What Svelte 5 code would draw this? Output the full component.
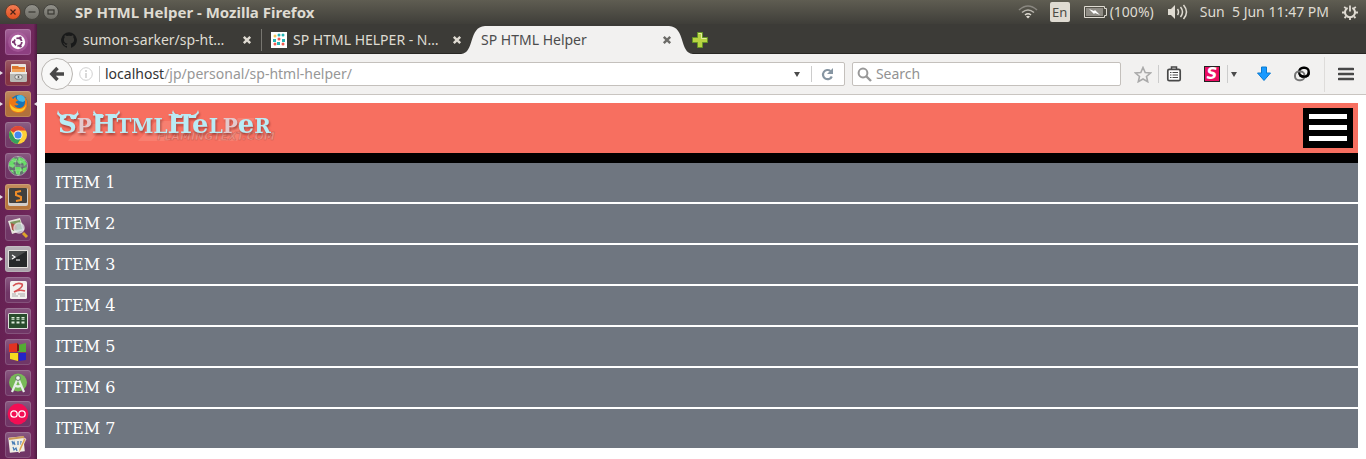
<script>
  const items = [1, 2, 3, 4, 5, 6, 7];
  const apps = [
    { id: 'ubuntu', name: 'Dash', tile: '#8d3f80' },
    { id: 'files', name: 'Files', tile: '#853543', running: true },
    { id: 'firefox', name: 'Firefox', tile: '#b1713c', running: true, focused: true },
    { id: 'chrome', name: 'Chrome', tile: '#733c69' },
    { id: 'globe', name: 'Network', tile: '#703666' },
    { id: 'sublime', name: 'Sublime Text', tile: '#b6763c', running: true },
    { id: 'viewer', name: 'Image Viewer', tile: '#703666' },
    { id: 'terminal', name: 'Terminal', tile: '#aaa3aa', running: true },
    { id: 'reader', name: 'Document Viewer', tile: '#703666' },
    { id: 'monitor', name: 'System Monitor', tile: '#703666' },
    { id: 'blocks', name: 'Workspaces', tile: '#703666' },
    { id: 'studio', name: 'Android Studio', tile: '#703666' },
    { id: 'oo', name: 'Recorder', tile: '#703666' },
    { id: 'notes', name: 'Notes', tile: '#703666' }
  ];
</script>

{#snippet closeIcon()}
  <svg width="10" height="10" viewBox="0 0 10 10" aria-hidden="true"><path d="M1.8 1.8 8.2 8.2M8.2 1.8 1.8 8.2" stroke="currentColor" stroke-width="2.4" /></svg>
{/snippet}

{#snippet appIcon(id)}
  <svg width="26" height="26" viewBox="0 0 26 26" aria-hidden="true">
    {#if id === 'ubuntu'}
      <circle cx="13" cy="13" r="10" fill="#b568a8" opacity=".5" />
      <circle cx="13" cy="13" r="7.2" fill="#fff" />
      <circle cx="13" cy="13" r="3.8" fill="none" stroke="#7c3771" stroke-width="1.8" stroke-dasharray="6.4 1.5" />
      <g fill="#7c3771"><circle cx="8.2" cy="13" r="1.3" /><circle cx="15.4" cy="8.8" r="1.3" /><circle cx="15.4" cy="17.2" r="1.3" /></g>
    {:else if id === 'files'}
      <rect x="6" y="4" width="15" height="10" rx="1" fill="#e9e5dd" />
      <path d="M7 6h6l1 1h6v6H7z" fill="#dc762c" /><path d="M7 9h13v5H7z" fill="#f2a35a" />
      <rect x="5" y="12" width="17" height="10" rx="1.5" fill="#b8b8b4" /><rect x="5" y="12" width="17" height="2" fill="#e8e8e4" />
      <rect x="10" y="15" width="7" height="4" rx="1.5" fill="#e9e9e7" stroke="#666" stroke-width=".8" /><circle cx="13.5" cy="17" r="1" fill="#555" />
    {:else if id === 'firefox'}
      <circle cx="14" cy="12.5" r="8.8" fill="#1674b8" /><path d="M12 5q6-3 9 4l-3 2-4-1-2-2z" fill="#49b9e3" />
      <path d="M5 5q0 3-1 7c0 6 4 10 9.500 10 6 0 9-5 9-9 0-4-2-6-3-7 2 7-1 11-5 11-3 0-5-2-5-3 2 1 4 0 4-1-2-1-3-1-3-2l3-2c-2 0-3-1-3-3-2 1-2 2-2 2C6 7 5 5 5 5z" fill="#ed7715" />
      <path d="M5 13c0 6 4 8 9 8 4 0 7-3 7-8-1 4-4 5-7 5-5 0-7-3-9-5z" fill="#fbc629" />
    {:else if id === 'chrome'}
      <circle cx="13" cy="13" r="9" fill="#ffcf37" /><path d="M13 13 5.200 8.500A9 9 0 0 1 20.800 8.500H13z" fill="#de4637" />
      <path d="M5.200 8.500A9 9 0 0 0 12.500 22l4-6.500L13 13 9 15z" fill="#37a15d" />
      <circle cx="13" cy="13" r="4.500" fill="#f3f3f3" /><circle cx="13" cy="13" r="3.500" fill="#4389ef" />
    {:else if id === 'globe'}
      <circle cx="13" cy="13" r="9.600" fill="#62736e" stroke="#a392a6" />
      <path d="M4 10l4-5 4 1-1 3-3 1 2 2-2 3-4-2zM14 4l5 2 3 5-3 2-1-3-4 1-2-3zM10 14l5 0 3 3-3 2v3l-4-1zM18 15l4-1-1 4-3 2zM5 17l3 0 1 4z" fill="#69dc69" />
      <path d="M4 13h18M6 7q7 4 14 0M6 19q7-4 14 0M13 3q-6 10 0 20M13 3q6 10 0 20" fill="none" stroke="#c7d6c5" stroke-width=".6" opacity=".6" />
    {:else if id === 'sublime'}
      <rect x="3" y="4" width="20" height="18" rx="2" fill="#d2ceca" /><rect x="4" y="4" width="18" height="15" rx="1" fill="#41403e" />
      <path d="M16 7l-5 1v3l5 2v3l-5 1" fill="none" stroke="#f08d27" stroke-width="2" />
    {:else if id === 'viewer'}
      <path d="M3 6l12-3 4 12-12 4z" fill="#e8e5dd" /><path d="M5 7l10-2 2 9-9 2z" fill="#7f9a62" /><path d="M6 8l5 2 1 4-5 1z" fill="#b14d44" />
      <circle cx="14" cy="13" r="5" fill="#cddae0" opacity=".75" stroke="#eee" stroke-width="1.500" /><path d="m18 18 4 4" stroke="#dda52a" stroke-width="3" />
    {:else if id === 'terminal'}
      <rect x="3" y="4" width="20" height="18" rx="1" fill="#e4e3df" /><rect x="4" y="5" width="18" height="16" fill="#26292a" />
      <path d="M4 5h18L7 14H4z" fill="#4b4e4e" /><path d="m7 9 3 2-3 2M11 14h4" fill="none" stroke="#fff" stroke-width="1.200" />
    {:else if id === 'reader'}
      <rect x="5" y="4" width="17" height="18" rx="1.500" fill="#f4f1ef" />
      <path d="M8 9q4-4 9-2 2 3-8 8 5-3 11-1" fill="none" stroke="#d65252" stroke-width="1.600" /><path d="M7 17h4m2 0h7M7 19h6m2 0h5" stroke="#aaa" />
    {:else if id === 'monitor'}
      <rect x="3" y="5" width="20" height="16" rx="1.500" fill="#e0e0dc" /><rect x="4" y="6" width="18" height="14" fill="#294c2d" />
      <path d="M8 9v7m5-7v7m5-7v7" stroke="#dbead9" stroke-width="3" stroke-dasharray="1.500 .7" /><path d="M5 12.500h16" stroke="#294c2d" />
    {:else if id === 'blocks'}
      <path d="M4 5l8-1v9H4z" fill="#e33222" /><path d="M13 6l8-2v9h-8z" fill="#54ab33" /><path d="M5 14h8v8l-8-2z" fill="#f5dc1e" /><path d="M14 14h7v7l-7 1z" fill="#2524c7" /><path d="M12 4l2 2v6h-2z" fill="#731b14" />
    {:else if id === 'studio'}
      <circle cx="13" cy="12.500" r="9" fill="#78b957" /><path d="m13 8-6 14m6-14 6 14M9 15q4 3 8 0" fill="none" stroke="#e7eee8" stroke-width="2.200" /><circle cx="13" cy="8" r="2.400" fill="#eef3ee" stroke="#637568" />
    {:else if id === 'oo'}
      <circle cx="13" cy="13" r="10.400" fill="#f20e54" /><g fill="none" stroke="#fff" stroke-width="1.300"><circle cx="9" cy="13" r="3.200" /><circle cx="17" cy="13" r="3.200" /></g>
    {:else}
      <rect x="4" y="5" width="15" height="15" fill="#f0eee5" transform="rotate(-6 12 12)" /><path d="M4 7l15-2" stroke="#cc9b57" stroke-width="2" />
      <path d="m7 9 1 3 1-2 1 3m3-4v4m3-4v4M8 15l1 3 2-2 1 3" fill="none" stroke="#4179b4" stroke-width="1.200" /><path d="m21 7-5 11-2 3 0-4 5-11z" fill="#dba54f" stroke="#fff" stroke-width=".6" />
    {/if}
  </svg>
{/snippet}

<div class="desktop">
  <header class="titlebar">
    <div class="window-buttons">
      <button class="win close" aria-label="Close window"><svg viewBox="0 0 16 16"><path d="m5.500 5.500 5 5m0-5-5 5" stroke="#4b2217" stroke-width="1.200" /></svg></button>
      <button class="win" aria-label="Minimize"><svg viewBox="0 0 16 16"><path d="M4.500 8h7" stroke="#393833" stroke-width="1.200" /></svg></button>
      <button class="win" aria-label="Maximize"><svg viewBox="0 0 16 16"><rect x="5" y="6" width="6" height="4" fill="none" stroke="#393833" stroke-width="1.200" /></svg></button>
    </div>
    <strong class="window-title">SP HTML Helper - Mozilla Firefox</strong>
    <div class="indicators">
      <svg class="wifi" width="20" height="16" viewBox="0 0 20 16"><g fill="none" stroke-width="1.600"><path d="M1 6q9-8 18 0" stroke="#8a8881" /><path d="M4 8.500q6-5 12 0" stroke="#bab7af" /><path d="M7 11q3-2.500 6 0" stroke="#dfdbd2" /></g><path d="m8 12.500 2 2 2-2q-2-1.500-4 0z" fill="#dfdbd2" /></svg>
      <span class="lang">En</span>
      <span class="battery">
        <svg width="25" height="14" viewBox="0 0 25 14"><path d="M1.500 1.500h20v2h2v7h-2v2h-20z" fill="none" stroke="#dfdbd2" /><path d="M3 3h17v8H3z" fill="#8e8b84" /><path d="m6 4 5 2 1-1 5 5-5-2-1 1z" fill="#fff" /></svg>
        (100%)
      </span>
      <svg class="sound" width="20" height="18" viewBox="0 0 20 18"><path d="M0 6h3l4-4v14l-4-4H0z" fill="#dfdbd2" /><path d="M9.500 6q2 3 0 6M12.500 4q4 5 0 10M15.500 2q6 7 0 14" fill="none" stroke="#dfdbd2" stroke-width="1.500" /></svg>
      <time>Sun&nbsp; 5 Jun 11:47 PM</time>
      <svg width="16" height="16" viewBox="0 0 16 16"><path d="M5.600 3.800a5 5 0 1 0 4.800 0" fill="none" stroke="#dfdbd2" stroke-width="2" /><path d="M8 1.500v6M2.200 2.800 4 4.400m9.800-1.600L12 4.400M0 8.500h3m10 0h3M2.500 14 4 12.500m9.500 1.500L12 12.500M8 13v3" stroke="#dfdbd2" stroke-width="1.800" /></svg>
    </div>
  </header>

  <div class="workspace">
    <nav class="launcher" aria-label="Applications">
      {#each apps as app}
        <button class="app" class:running={app.running} class:focused={app.focused} aria-label={app.name} style:background-color={app.tile}>{@render appIcon(app.id)}</button>
      {/each}
    </nav>

    <div class="browser">
      <div class="tabs">
        <div class="tab first">
          <svg width="16" height="16" viewBox="0 0 16 16"><path d="M8 .3a7.900 7.900 0 0 0-2.500 15.400c.4.100.5-.2.500-.4v-1.500c-2.200.5-2.700-1-2.700-1-.4-.9-.9-1.200-.9-1.200-.7-.5.1-.5.1-.5.8.1 1.200.8 1.200.8.700 1.300 1.900.9 2.300.7.100-.5.300-.9.500-1.100-1.800-.2-3.600-.9-3.600-4 0-.9.300-1.600.8-2.100-.1-.2-.4-1 .1-2.100 0 0 .7-.2 2.200.8a7.600 7.600 0 0 1 4 0c1.500-1 2.200-.8 2.200-.8.400 1.100.2 1.900.1 2.100.5.600.8 1.300.8 2.100 0 3.100-1.900 3.800-3.700 4 .3.300.6.800.6 1.500v2.300c0 .2.100.5.500.4A7.900 7.900 0 0 0 8 .3z" fill="#191a1a" /></svg>
          <span class="tab-text">sumon-sarker/sp-ht…</span>
          <button aria-label="Close tab">{@render closeIcon()}</button>
        </div>
        <div class="tab">
          <svg width="16" height="16" viewBox="0 0 16 16"><path fill="#fff" d="M0 0h16v16H0z" /><g fill="#27b5b5"><circle cx="8" cy="3" r="1.500" /><circle cx="12" cy="3" r="1.500" /><path d="M2 7h3v3H2zM6 10h3v3H6zM11 7h3v3h-3z" /></g><g fill="#ef5b50"><circle cx="8" cy="7" r="1.500" /><circle cx="4" cy="12" r="1.500" /><circle cx="12" cy="12" r="1.500" /></g><circle cx="4" cy="4" r="1.500" fill="#f4c95b" /></svg>
          <span class="tab-text">SP HTML HELPER - N…</span>
          <button aria-label="Close tab">{@render closeIcon()}</button>
        </div>
        <div class="tab active">
          <svg class="curve" viewBox="0 0 232 28" preserveAspectRatio="none" aria-hidden="true"><path d="M0 28C14 27 7 1 24 0H208C225 1 218 27 232 28z" fill="#f2f1f0" /></svg>
          <span class="tab-text">SP HTML Helper</span>
          <button aria-label="Close tab">{@render closeIcon()}</button>
        </div>
        <button class="new-tab" aria-label="New tab"><svg width="16" height="16" viewBox="0 0 16 16"><path d="M5.500.5h5v5h5v5h-5v5h-5v-5h-5v-5h5z" fill="#b8d342" stroke="#659526" /><path d="M6.500 1.500h3v5h5" fill="none" stroke="#e3ee9c" /></svg></button>
      </div>

      <div class="toolbar">
        <button class="back" aria-label="Back"><svg width="16" height="16" viewBox="0 0 16 16"><path d="M8.500 2 2.800 8l5.700 6M3 8h12" fill="none" stroke="#484848" stroke-width="3.400" /></svg></button>
        <div class="address">
          <svg width="14" height="14" viewBox="0 0 14 14"><circle cx="7" cy="7" r="6.300" fill="none" stroke="#d0d0d0" /><path d="M7 3v2m0 1v5" stroke="#d0d0d0" stroke-width="1.600" /></svg>
          <i class="divider"></i>
          <span class="url"><b>localhost</b>/jp/personal/sp-html-helper/</span>
          <button class="drop" aria-label="Show history"><svg width="6" height="5" viewBox="0 0 6 5"><path d="M0 0h6L3 5z" fill="#4b4b4b" /></svg></button>
          <button class="reload" aria-label="Reload"><svg width="13" height="13" viewBox="0 0 13 13"><path d="M9.500 3A4.600 4.600 0 1 0 10.800 8.500" fill="none" stroke="#8695a2" stroke-width="2.200" /><path d="M12 0v6H6z" fill="#8695a2" /></svg></button>
        </div>
        <label class="search">
          <svg width="15" height="15" viewBox="0 0 15 15"><circle cx="6" cy="6" r="4.400" fill="none" stroke="#989898" stroke-width="2" /><path d="m9 9 5 5" stroke="#989898" stroke-width="2.400" /></svg>
          <input type="text" placeholder="Search" aria-label="Search" />
        </label>
        <div class="tools">
          <button class="star" aria-label="Bookmark"><svg width="18" height="17" viewBox="0 0 18 17"><path d="m9 1.500 2.200 5 5.300.5-4 3.500 1.200 5.200L9 13l-4.700 2.700 1.200-5.200-4-3.500 5.300-.5z" fill="none" stroke="#aaa" stroke-width="1.600" /></svg></button>
          <button class="list" aria-label="Show bookmarks"><svg width="16" height="16" viewBox="0 0 16 16"><path d="M5.500 3V1h5v2" fill="none" stroke="#484848" stroke-width="1.500" /><rect x="1.800" y="3.300" width="12.400" height="11.400" rx="1.500" fill="#fff" stroke="#484848" stroke-width="1.700" /><path d="M4 6.500h1.500m1 0H12M4 9h1.500m1 0H12M4 11.500h1.500m1 0H12" stroke="#484848" stroke-width="1.200" /></svg></button>
          <button class="ext" aria-label="S extension"><span class="letter">S</span></button>
          <button class="ext-menu" aria-label="Extension menu"><svg width="6" height="5" viewBox="0 0 6 5"><path d="M0 0h6L3 5z" fill="#4b4b4b" /></svg></button>
          <button class="down" aria-label="Downloads"><svg width="16" height="16" viewBox="0 0 16 16"><path d="M5.500 1h5v6h4L8 14.500 1.500 7h4z" fill="#189aff" stroke="#087ad1" /></svg></button>
          <button class="link" aria-label="Links"><svg width="18" height="16" viewBox="0 0 18 16"><rect x="6.200" y="1.800" width="9.500" height="8.800" rx="4" fill="none" stroke="#000" stroke-width="2.400" /><rect x="2" y="5.500" width="9.500" height="8.800" rx="4" fill="none" stroke="#777" stroke-width="2" /><path d="M7 9q1 1.600 4.500 1.600 4.200 0 4.200-4" fill="none" stroke="#000" stroke-width="2.400" /></svg></button>
          <button class="menu" aria-label="Open menu"><svg width="16" height="14" viewBox="0 0 16 14"><path d="M1 2h14M1 7h14M1 12h14" stroke="#484848" stroke-width="2.600" stroke-linecap="round" /></svg></button>
        </div>
      </div>

      <main class="page">
        <div class="banner">
          <svg class="logo" width="230" height="40" viewBox="0 0 230 40" role="img" aria-label="SpHtmlHelper">
            <g fill="#ffb9a8" opacity=".22"><path d="m18 34 12-17h25L41 34zM88 34l18-20h24l-12 20zM168 34l20-23h17l-18 23z" /></g>
            <text class="mark" x="107" y="33">FLAMINGTEXT.COM</text>
            <g class="word">
              <path d="M8 3q1 5 6 5l3-1-1 4-5 2q0-3-3-5l-1-1zM28 3q-1 5-6 5l-3-1 2 5 5 0q0-3 3-5l-1-1zM44 3q1 4 5 5h5l-1 3h-7q0-3-2-4l-1-1zM69 3q-1 4-5 5h-5l1 3h7q0-3 2-4l1-1zM123 3q1 4 5 5h5l-1 3h-7q0-3-2-4l-1-1zM148 3q-1 4-5 5h-5l1 3h7q0-3 2-4l1-1z" />
              <text x="8" y="26"><tspan class="cap">S</tspan><tspan class="soft">P</tspan><tspan class="cap">H</tspan>TML<tspan class="cap">H</tspan><tspan class="cap">e</tspan>L<tspan class="soft">P</tspan><tspan class="cap">e</tspan>R</text>
            </g>
          </svg>
          <button class="burger" aria-label="Toggle menu"><i></i><i></i><i></i></button>
        </div>
        <ul class="menu-list">
          {#each items as n}
            <li><a href="#item-{n}">ITEM {n}</a></li>
          {/each}
        </ul>
      </main>
    </div>
  </div>
</div>

<style>
  :global(body) { margin: 0; background: #fff; }
  * { box-sizing: border-box; }
  button { border: 0; padding: 0; margin: 0; background: none; display: flex; align-items: center; justify-content: center; flex: none; }
  svg { display: block; flex: none; }
  .desktop { min-height: 100vh; display: flex; flex-direction: column; font: 14px/20px "Noto Sans", sans-serif; }
  .titlebar { height: 24px; display: flex; align-items: center; padding: 0 8px 0 5px; background: linear-gradient(#5f5d52, #3f3e39); color: #dfdbd2; }
  .window-buttons { display: flex; gap: 3px; }
  .win { width: 16px; height: 16px; border-radius: 50%; border: 1px solid #45443f; background: linear-gradient(#92918a, #6e6d66); }
  .win.close { background: linear-gradient(#f47d54, #e2501f); border-color: #63402f; }
  .win svg { width: 16px; height: 16px; }
  .window-title { margin-left: 16px; flex: 1; min-width: 0; font-size: 15px; white-space: nowrap; }
  .indicators { display: flex; align-items: center; white-space: nowrap; }
  .lang { margin: 0 13px 0 12px; width: 20px; height: 20px; border-radius: 2px; background: #dfdbd2; color: #4c4b45; text-align: center; font-size: 13px; }
  .battery { display: flex; align-items: center; gap: 2px; margin-right: 14px; }
  .sound { margin-right: 12px; }
  time { margin-right: 13px; }
  .workspace { flex: 1; display: flex; }
  .launcher { flex: none; width: 37px; padding: 5px 6px 0 5px; display: flex; flex-direction: column; gap: 5px; background: linear-gradient(90deg, #662153, #70285c 90%, #4e1a40); max-height: calc(100vh - 24px); overflow: hidden; }
  .app { width: 26px; height: 26px; border-radius: 3px; position: relative; box-shadow: inset 0 0 0 1px rgba(255, 255, 255, .15); background-image: linear-gradient(rgba(255, 255, 255, .18), transparent 60%); }
  .running::before, .focused::after { content: ""; position: absolute; top: 11px; border: 2px solid transparent; }
  .running::before { left: -5px; border-left: 3px solid #e6dfe4; border-right: 0; }
  .focused::after { right: -6px; border-right: 3px solid #e6dfe4; border-left: 0; }
  .browser { flex: 1; min-width: 0; }
  .tabs { height: 30px; display: flex; padding-left: 15px; background: #3c3b37; border-bottom: 1px solid #282724; color: #dfdbd2; }
  .tab { flex: 0 1 210px; min-width: 0; height: 29px; display: flex; align-items: center; gap: 6px; padding: 3px 10px 0 9px; position: relative; }
  .first::after { content: ""; position: absolute; right: 0; top: 5px; height: 22px; border-right: 1px solid #777670; }
  .tab-text { flex: 1; min-width: 0; white-space: nowrap; overflow: hidden; position: relative; }
  .tab button { color: #dfdbd2; position: relative; }
  .active { color: #4c4c4c; height: 30px; padding-top: 2px; }
  .tab.active button { color: #6c6b68; }
  .curve { position: absolute; left: -11px; bottom: 0; width: calc(100% + 22px); height: 28px; }
  .new-tab { padding: 3px 0 0; margin-left: 10px; }
  .toolbar { height: 41px; display: flex; align-items: center; padding: 0 7px 0 4px; background: #f2f1f0; border-bottom: 1px solid #c9c5c1; }
  .back { width: 32px; height: 32px; border-radius: 50%; border: 1px solid #b9b6b2; background: #f8f8f7; position: relative; }
  .address { flex: 782 1 0; min-width: 0; height: 24px; margin-left: -6px; padding-left: 11px; display: flex; align-items: center; background: #fff; border: 1px solid #c4c0bc; border-radius: 2px; }
  .divider { width: 1px; height: 16px; margin: 0 5px 0 6px; background: #ccc; }
  .url { flex: 1; min-width: 0; color: #979797; white-space: nowrap; }
  .url b { color: #333; font-weight: 400; }
  .drop { width: 28px; height: 20px; }
  .reload { width: 33px; height: 16px; border-left: 1px solid #ccc; }
  .search { flex: 269 1 0; min-width: 0; height: 24px; margin-left: 7px; padding-left: 4px; display: flex; align-items: center; gap: 4px; background: #fff; border: 1px solid #c4c0bc; border-radius: 2px; }
  .search input { flex: 1; min-width: 0; width: 0; border: 0; padding: 0; outline: 0; background: none; font: inherit; }
  .search input::placeholder { color: #929292; opacity: 1; }
  .tools { flex: none; display: flex; align-items: center; }
  .star { width: 25px; height: 18px; margin-left: 13px; border-right: 1px solid #ccc; justify-content: flex-start; }
  .list { margin-left: 7px; }
  .ext { width: 24px; height: 18px; border-right: 1px solid #ccc; justify-content: flex-start; margin-left: 22px; }
  .letter { width: 16px; height: 16px; background: #eb0c62; border: 1px solid #222; color: #fff; font: italic bold 15px/14px "DejaVu Sans", sans-serif; text-align: center; }
  .ext-menu { margin-left: 3px; }
  .down { margin-left: 19px; }
  .link { margin-left: 21px; }
  .menu { height: 35px; margin-left: 13px; padding-left: 13px; border-left: 1px solid #dedcda; padding-right: 5px; }
  .page { padding: 8px; background: #fff; font: 16px/19px "DejaVu Serif", serif; }
  .banner { height: 60px; padding: 0 5px; display: flex; align-items: flex-start; justify-content: space-between; background: #f76f60; border-bottom: 10px solid #000; }
  .logo { margin-top: 4px; overflow: visible; }
  .logo text { font: bold 20px "DejaVu Serif", serif; }
  .logo .cap { font-size: 26px; }
  .logo .word { fill: #b9ecf5; filter: drop-shadow(1px 2px 1px rgba(120, 40, 35, .6)); }
  .logo .soft { fill: #e3c9cd; }
  .logo text.mark { font: italic bold 11px "DejaVu Sans", sans-serif; fill: #ee9387; stroke: #c9594d; stroke-width: .4; }
  .burger { width: 50px; height: 40px; margin-top: 5px; padding-top: 6px; flex-direction: column; justify-content: flex-start; gap: 6px; background: #000; }
  .burger i { width: 38px; height: 5px; background: #fff; }
  .menu-list { list-style: none; margin: 0; padding: 0; display: flex; flex-direction: column; gap: 2px; }
  .menu-list a { display: block; padding: 10px; background: #6f7680; color: #fff; text-decoration: none; }
</style>
